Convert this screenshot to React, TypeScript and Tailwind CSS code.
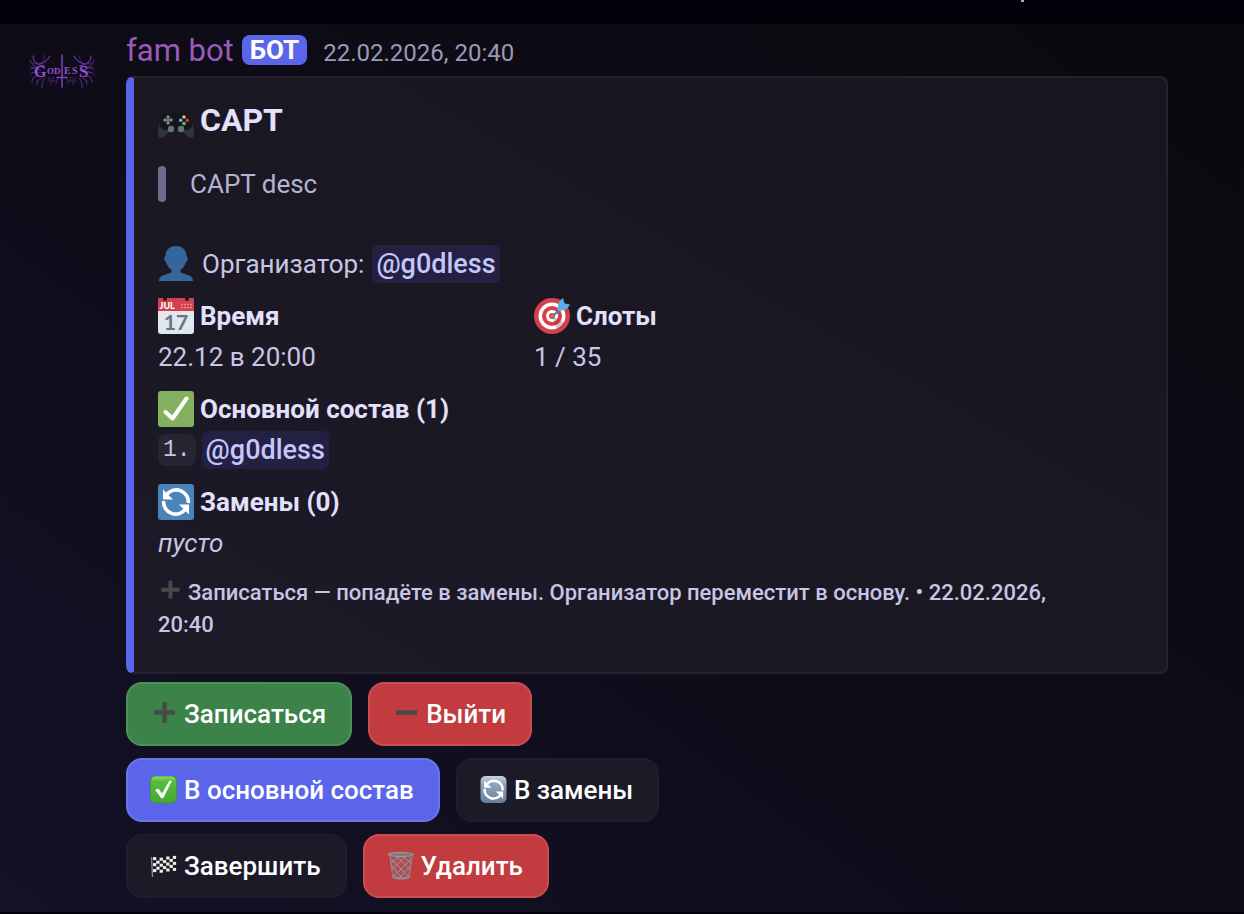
import React from "react";

function Wing() {
  return (
    <g>
      <path d="M22 34 C15 33 11 29 11 24" strokeWidth="1.3" />
      <path d="M17 32 C22 31 26 28 28 24" strokeWidth="1.1" />
      <path d="M20 30 C22 28 23 26 22 23" opacity=".6" />
      <path d="M16 36 C12 34 9 32 8 28" />
      <path d="M18 38 C13 35 10 35 8 38" />
      <path d="M17 41 C13 39 10 40 8 43" opacity=".8" />
      <path d="M17 44 C13 43 10 46 10 50" />
      <path d="M20 46 C16 47 15 50 15 53" opacity=".8" />
      <path d="M23 46 C20 49 20 52 20 56" />
      <path d="M27 45 L26 50 M31 45 L32 49 M35 46 L34 52 M29 46 L29 53" opacity=".6" />
      <path d="M14 32 L11 31 M13 40 L10 41 M17 48 L14 50 M12 36 L9 35" opacity=".7" />
      <path d="M28 49 H33" opacity=".6" />
    </g>
  );
}

function Logo() {
  return (
    <svg viewBox="0 0 80 80" className="h-20 w-20 rounded-full" role="img" aria-label="Godless">
      <g fill="none" stroke="#6a36a4" strokeWidth=".9" strokeLinecap="round" strokeLinejoin="round">
        <Wing />
        <g transform="matrix(-1 0 0 1 80 0)">
          <Wing />
        </g>
        <path d="M40 23 V55" strokeWidth="1.500" stroke="#7f42c0" />
        <path d="M35 45.500 H45" strokeWidth="1.300" stroke="#7f42c0" />
      </g>
      <g fill="#9350d8" fontFamily="'Liberation Serif', serif" fontWeight="700">
        <text x="12" y="45" fontSize="16">G</text>
        <text x="25" y="42" fontSize="9">O</text>
        <text x="32" y="42" fontSize="9">D</text>
        <text x="42" y="42" fontSize="10">E</text>
        <text x="50" y="42" fontSize="10">S</text>
        <text x="57" y="45" fontSize="17">S</text>
      </g>
    </svg>
  );
}

const emojiBox = "size-9 shrink-0";

function Gamepad() {
  return (
    <svg viewBox="0 0 36 36" className={emojiBox} aria-hidden="true">
      <path fill="#2f3538" d="M3 16 C1 22 0 28 0 33 C0 36 4 37 7 34 L13 28 L9 18Z M33 16 C35 22 36 28 36 33 C36 36 32 37 29 34 L23 28 L27 18Z" />
      <path fill="#14171a" d="M2 20 C3 13 6 11 10 11 H26 C30 11 33 13 34 20 C35 26 32 28 28 28 H8 C4 28 1 26 2 20Z" />
      <g fill="#7f8b93">
        <circle cx="10" cy="15" r="1.7" /><circle cx="10" cy="21" r="1.7" />
        <circle cx="7" cy="18" r="1.7" /><circle cx="13" cy="18" r="1.7" />
        <path d="M9.400 15h1.200v6h-1.200z M7 17.400h6v1.200H7z" />
      </g>
      <g fill="#667278"><circle cx="13" cy="27" r="3.2" /><circle cx="23" cy="27" r="3.2" /></g>
      <circle cx="26" cy="15" r="1.8" fill="#f5b945" />
      <circle cx="22.7" cy="18.3" r="1.8" fill="#55acee" />
      <circle cx="29.3" cy="18.3" r="1.8" fill="#dd2e44" />
      <circle cx="26" cy="21.6" r="1.8" fill="#78b159" />
    </svg>
  );
}

function Person() {
  return (
    <svg viewBox="0 0 36 36" className={emojiBox} aria-hidden="true">
      <path fill="#35659a" d="M18 0 C25 0 28.500 4.500 28.500 10 C30.500 10.500 30 15.500 28 16 C27 19.500 25 22 22.500 24 C22 27 24 27.500 27 28 C32 29 35 31 35 35 H1 C1 31 4 29 9 28 C12 27.500 14 27 13.500 24 C11 22 9 19.500 8 16 C6 15.500 5.500 10.500 7.500 10 C7.500 4.500 11 0 18 0Z" />
    </svg>
  );
}

function Calendar() {
  return (
    <svg viewBox="0 0 36 36" className={emojiBox} aria-hidden="true">
      <rect width="36" height="36" rx="3" fill="#e1e8ed" />
      <path fill="#d3404e" d="M0 13V3a3 3 0 0 1 3-3h30a3 3 0 0 1 3 3v10z" />
      <circle cx="7" cy="1" r="2" fill="#1c1926" />
      <circle cx="29" cy="1" r="2" fill="#1c1926" />
      <text x="1.500" y="10.800" fontSize="9" fontWeight="900" fill="#fff" fontFamily="Lato, sans-serif">JUL</text>
      <path stroke="#ed8d96" strokeWidth="1.600" strokeDasharray="2 1" d="M23 6.500h11 M23 9.500h11" />
      <text x="18" y="32" fontSize="21" textAnchor="middle" fontWeight="700" fill="#66757f" fontFamily="Lato, sans-serif">17</text>
    </svg>
  );
}

function Target() {
  return (
    <svg viewBox="0 0 36 36" className={emojiBox} aria-hidden="true">
      <circle cx="18" cy="18" r="18" fill="#d3404e" />
      <circle cx="18" cy="18" r="13.5" fill="#fff" />
      <circle cx="18" cy="18" r="10" fill="#d3404e" />
      <circle cx="18" cy="18" r="6" fill="#fff" />
      <circle cx="18" cy="18" r="3" fill="#d3404e" />
      <path d="M18 18 L31 25 C29 29 27 31 23 31.500Z" fill="#8b2a38" opacity=".3" />
      <path d="M18 19 L30 7" stroke="#3b88c3" strokeWidth="2.2" />
      <path fill="#5dadec" d="M24 12.500 C23 7 25 2 29 0 L30.500 5.500 L36 6.500 C34 11 29 13.500 24 12.500Z" />
      <circle cx="18" cy="18.500" r="1.200" fill="#c99a3a" />
    </svg>
  );
}

function Check() {
  return (
    <svg viewBox="0 0 36 36" className={emojiBox} aria-hidden="true">
      <rect width="36" height="36" rx="3" fill="#84b160" />
      <path d="M7.500 21 L14.500 27.500 L28.500 7.500" fill="none" stroke="#fff" strokeWidth="4" strokeLinecap="round" strokeLinejoin="round" />
    </svg>
  );
}

function CycleArrows() {
  return (
    <g>
      <path d="M8.500 11 A12 12 0 0 1 30.300 19 M27.500 25 A12 12 0 0 1 5.700 17" fill="none" stroke="#fff" strokeWidth="3.600" />
      <path fill="#fff" d="M5 5.500 V15.500 H15z M31 30.500 V20.500 H21z" />
    </g>
  );
}

function Cycle() {
  return (
    <svg viewBox="0 0 36 36" className={emojiBox} aria-hidden="true">
      <rect width="36" height="36" rx="3" fill="#4a84ba" />
      <CycleArrows />
    </svg>
  );
}

const smallEmoji = "size-7 shrink-0";

function PlusMark({ className }: { className: string }) {
  return (
    <svg viewBox="0 0 28 28" className={className} aria-hidden="true">
      <path stroke="#494949" strokeWidth="4.500" d="M4 12.500h21 M14.500 2v21" />
    </svg>
  );
}

function MinusMark() {
  return (
    <svg viewBox="0 0 28 28" className={smallEmoji} aria-hidden="true">
      <path stroke="#494949" strokeWidth="4.500" d="M4 12.500h21" />
    </svg>
  );
}

function GlossyCheck() {
  return (
    <svg viewBox="0 0 28 28" className={smallEmoji} aria-hidden="true">
      <defs>
        <linearGradient id="green" x2="0" y2="1">
          <stop offset="0" stopColor="#8be06a" /><stop offset=".2" stopColor="#55bd3c" /><stop offset="1" stopColor="#45a92f" />
        </linearGradient>
      </defs>
      <rect x=".5" y="0" width="26" height="27" rx="5" fill="url(#green)" stroke="#3c962a" strokeWidth=".8" />
      <path d="M5.500 14 L8.500 13 L12 18 L19.500 5 L21.500 5 L13 22 L11.500 22Z" fill="#fff" stroke="#fff" strokeWidth=".6" strokeLinejoin="round" />
    </svg>
  );
}

function GlossyCycle() {
  return (
    <svg viewBox="0 0 28 28" className={smallEmoji} aria-hidden="true">
      <defs>
        <linearGradient id="steel" x2="0" y2="1">
          <stop offset="0" stopColor="#c3d3e2" /><stop offset=".3" stopColor="#8fa5bb" /><stop offset="1" stopColor="#667f98" />
        </linearGradient>
      </defs>
      <rect x=".5" y="0" width="26" height="27" rx="5" fill="url(#steel)" />
      <g transform="translate(.5 .5) scale(.73)"><CycleArrows /></g>
    </svg>
  );
}

const flagWave = [0.6, 1.2, 1.2, 0.6, 0, -0.6, -0.6];

function Flag() {
  const cells: React.ReactNode[] = [];
  for (let r = 0; r < 5; r++)
    for (let c = 0; c < 7; c++)
      if ((r + c) % 2 === 0)
        cells.push(<rect key={`${r}-${c}`} x={3 + c * 3.3} y={4.5 + r * 3 + flagWave[c]} width="3.3" height="3" fill="#efefef" />);
  return (
    <svg viewBox="0 0 28 28" className={smallEmoji} aria-hidden="true">
      <path d="M3 5 C9 7 15 5.500 19 4 C22 3.500 24 3.500 26 4 V19 C20 18 16 21 11 21 C8 21 6 20.500 3 20.500Z" fill="#1c1c20" />
      {cells}
      <path d="M1.500 5 L2.500 25" stroke="#8d8f94" strokeWidth="1.300" />
    </svg>
  );
}

function Basket() {
  return (
    <svg viewBox="0 0 28 28" className={smallEmoji} aria-hidden="true">
      <path d="M2.500 2 L5.500 25 C9 28 19 28 22.500 25 L25.500 2Z" fill="#a05a60" opacity=".75" />
      <path fill="none" stroke="#b5a4a8" strokeWidth=".9" opacity=".8" d="M3 6 L22 25 M3 12 L15 26 M8 3 L24 18 M14 3 L25 12 M25 6 L6 25 M24 13 L12 26 M20 3 L4 18 M14 3 L3 12" />
      <path d="M3 4 L6 25 M25 4 L22 25" stroke="#85888f" strokeWidth="1.300" />
      <ellipse cx="14" cy="2.500" rx="12.500" ry="1.800" fill="#7d7277" stroke="#9b9fa6" strokeWidth="1.200" />
      <path d="M5.500 24.500 C9 27 19 27 22.500 24.500" fill="none" stroke="#8b8f96" strokeWidth="2.200" />
    </svg>
  );
}

function Mention() {
  return (
    <a href="#g0dless" className="flex h-[38px] items-center rounded-md bg-[#232042] px-1 text-[27px] font-medium text-[#c5c6fc]">
      @g0dless
    </a>
  );
}

function Field({ icon, name, children }: { icon: React.ReactNode; name: string; children: React.ReactNode }) {
  return (
    <section>
      <h3 className="flex h-9 items-center gap-1.5 leading-[38px] font-bold text-[#e3e0fd]">
        {icon}
        {name}
      </h3>
      <div className="mt-1 flex h-[38px] items-center gap-1.5">{children}</div>
    </section>
  );
}

const tones = {
  green: "border-[#4b9159] bg-[#3b8348]",
  red: "border-[#ca4f52] bg-[#c13b3f]",
  blue: "border-[#6c75ee] bg-[#5b65ea]",
  dark: "border-[#211e2b] bg-[#1d1a28]",
};

function Action({ tone, icon, children }: { tone: keyof typeof tones; icon: React.ReactNode; children: string }) {
  return (
    <button type="button" className={`flex h-16 items-center gap-1.5 rounded-2xl border-2 pr-6 pl-[22px] text-[26px] font-medium text-white ${tones[tone]}`}>
      {icon}
      {children}
    </button>
  );
}

export default function App() {
  return (
    <div className="flex min-h-screen flex-col bg-linear-to-bl from-[#0b080e] via-[#0e0c17] to-[#141128] font-['Roboto','Noto_Sans',sans-serif] text-[26px] leading-9 text-[#c8c5e5]">
      <div className="flex h-6 items-start justify-end bg-[#03020b] pr-[220px]">
        <span className="h-0.5 w-[3px] bg-[#aaa6c6]" />
      </div>
      <article className="flex grow gap-6 pr-[76px] pl-[22px]">
        <div className="shrink-0 pt-2">
          <Logo />
        </div>
        <div className="min-w-0 grow">
          <header className="flex h-[52px] items-baseline">
            <h1 className="text-[31px] leading-[54px] text-[#9a5bb8]">fam bot</h1>
            <span className="ml-2 flex h-[30px] items-center self-center rounded-lg bg-[#5b65ea] px-2 text-[26px] font-bold text-white">БОТ</span>
            <time className="ml-4 text-2xl text-[#9c99b8]">22.02.2026, 20:40</time>
          </header>
          <div className="rounded-lg border-2 border-l-8 border-[#24222c] border-l-[#5b65ea] bg-linear-to-bl from-[#17151d] to-[#1d1a28] px-6 pt-6 pb-[31px]">
            <h2 className="flex h-9 items-center gap-1.5 text-[32px] font-bold text-[#e3e0fd]">
              <Gamepad />
              CAPT
            </h2>
            <blockquote className="mt-7 flex gap-6 text-[#b5b2d2]">
              <span className="w-2 rounded bg-[#6f6b8c]" />
              CAPT desc
            </blockquote>
            <div className="mt-[43px] flex h-[38px] items-center gap-2">
              <Person />
              Организатор:
              <Mention />
            </div>
            <div className="mt-[15px] flex flex-col gap-[15px]">
              <div className="grid grid-cols-[376px_1fr]">
                <Field icon={<Calendar />} name="Время">22.12 в 20:00</Field>
                <Field icon={<Target />} name="Слоты">1 / 35</Field>
              </div>
              <Field icon={<Check />} name="Основной состав (1)">
                <code className="flex h-8 items-center rounded-lg bg-[#282533] px-[5px] font-['Liberation_Mono',monospace] text-[23px]">1.</code>
                <Mention />
              </Field>
              <Field icon={<Cycle />} name="Замены (0)">
                <em>пусто</em>
              </Field>
            </div>
            <footer className="mt-[15px] pr-16 text-[22px] leading-8 font-medium">
              <PlusMark className="mr-1.5 inline-block size-6 align-[-3px]" />
              Записаться — попадёте в замены. Организатор переместит в основу. • 22.02.2026, 20:40
            </footer>
          </div>
          <div className="mt-2 flex flex-col gap-3">
            <div className="flex gap-4">
              <Action tone="green" icon={<PlusMark className={smallEmoji} />}>Записаться</Action>
              <Action tone="red" icon={<MinusMark />}>Выйти</Action>
            </div>
            <div className="flex gap-4">
              <Action tone="blue" icon={<GlossyCheck />}>В основной состав</Action>
              <Action tone="dark" icon={<GlossyCycle />}>В замены</Action>
            </div>
            <div className="flex gap-4">
              <Action tone="dark" icon={<Flag />}>Завершить</Action>
              <Action tone="red" icon={<Basket />}>Удалить</Action>
            </div>
          </div>
        </div>
      </article>
      <div className="h-0.5 bg-[#03020b]" />
    </div>
  );
}
